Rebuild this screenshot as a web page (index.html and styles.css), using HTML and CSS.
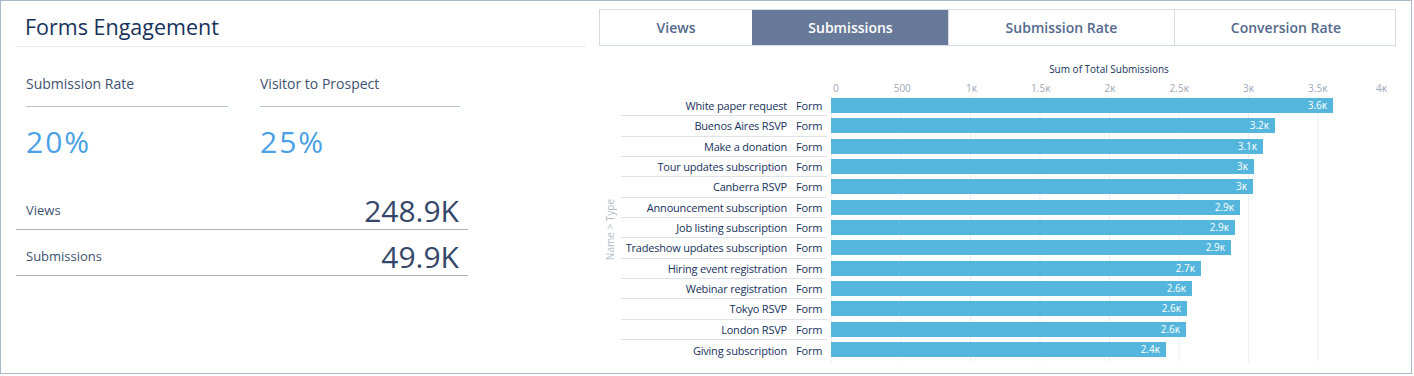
FILE: index.html
```html
<!DOCTYPE html>
<html lang="en">
<head>
<meta charset="utf-8">
<title>Forms Engagement</title>
<link rel="stylesheet" href="styles.css">
</head>
<body>
<div class="card">
  <section class="left">
    <h1 class="title">Forms Engagement</h1>
    <div class="kpis">
      <div class="kpi kpi-a">
        <div class="kpi-label">Submission Rate</div>
        <div class="kpi-value">20%</div>
      </div>
      <div class="kpi kpi-b">
        <div class="kpi-label">Visitor to Prospect</div>
        <div class="kpi-value">25%</div>
      </div>
    </div>
    <div class="stats">
      <div class="stat"><span class="stat-label">Views</span><span class="stat-value">248.9K</span></div>
      <div class="stat"><span class="stat-label">Submissions</span><span class="stat-value">49.9K</span></div>
    </div>
  </section>
  <section class="right">
    <div class="tabs">
      <div class="tab">Views</div>
      <div class="tab active">Submissions</div>
      <div class="tab">Submission Rate</div>
      <div class="tab">Conversion Rate</div>
    </div>
    <div class="chart">
      <div class="chart-title">Sum of Total Submissions</div>
      <div class="ticks">
        <div class="tick first"><span>0</span></div>
        <div class="tick"><span>500</span></div>
        <div class="tick"><span>1ĸ</span></div>
        <div class="tick"><span>1.5ĸ</span></div>
        <div class="tick"><span>2ĸ</span></div>
        <div class="tick"><span>2.5ĸ</span></div>
        <div class="tick"><span>3ĸ</span></div>
        <div class="tick"><span>3.5ĸ</span></div>
        <div class="tick last"><span>4ĸ</span></div>
      </div>
      <div class="chart-body">
        <div class="axis-title"><span>Name &gt; Type</span></div>
        <div class="labels">
          <div class="label-row"><span class="name">White paper request</span><span class="type">Form</span></div>
          <div class="label-row"><span class="name">Buenos Aires RSVP</span><span class="type">Form</span></div>
          <div class="label-row"><span class="name">Make a donation</span><span class="type">Form</span></div>
          <div class="label-row"><span class="name">Tour updates subscription</span><span class="type">Form</span></div>
          <div class="label-row"><span class="name">Canberra RSVP</span><span class="type">Form</span></div>
          <div class="label-row"><span class="name">Announcement subscription</span><span class="type">Form</span></div>
          <div class="label-row"><span class="name">Job listing subscription</span><span class="type">Form</span></div>
          <div class="label-row"><span class="name">Tradeshow updates subscription</span><span class="type">Form</span></div>
          <div class="label-row"><span class="name">Hiring event registration</span><span class="type">Form</span></div>
          <div class="label-row"><span class="name">Webinar registration</span><span class="type">Form</span></div>
          <div class="label-row"><span class="name">Tokyo RSVP</span><span class="type">Form</span></div>
          <div class="label-row"><span class="name">London RSVP</span><span class="type">Form</span></div>
          <div class="label-row"><span class="name">Giving subscription</span><span class="type">Form</span></div>
        </div>
        <div class="plot">
          <div class="bar-row"><div class="bar" style="width:502px">3.6ĸ</div></div>
          <div class="bar-row"><div class="bar" style="width:444px">3.2ĸ</div></div>
          <div class="bar-row"><div class="bar" style="width:432px">3.1ĸ</div></div>
          <div class="bar-row"><div class="bar" style="width:423px">3ĸ</div></div>
          <div class="bar-row"><div class="bar" style="width:422px">3ĸ</div></div>
          <div class="bar-row"><div class="bar" style="width:409px">2.9ĸ</div></div>
          <div class="bar-row"><div class="bar" style="width:404px">2.9ĸ</div></div>
          <div class="bar-row"><div class="bar" style="width:400px">2.9ĸ</div></div>
          <div class="bar-row"><div class="bar" style="width:370px">2.7ĸ</div></div>
          <div class="bar-row"><div class="bar" style="width:361px">2.6ĸ</div></div>
          <div class="bar-row"><div class="bar" style="width:356px">2.6ĸ</div></div>
          <div class="bar-row"><div class="bar" style="width:355px">2.6ĸ</div></div>
          <div class="bar-row"><div class="bar" style="width:335px">2.4ĸ</div></div>
        </div>
      </div>
    </div>
  </section>
</div>
</body>
</html>
```
FILE: styles.css
```css
html, body {
  margin: 0;
  padding: 0;
  background: #ffffff;
}
body {
  font-family: "Open Sans", "Liberation Sans", sans-serif;
  color: #16325c;
}
.card {
  box-sizing: border-box;
  width: 1412px;
  height: 374px;
  border: 1px solid #a9b8cb;
  display: flex;
  background: #ffffff;
}

/* ---------- left ---------- */
.left {
  width: 597px;
  flex: none;
}
.title {
  margin: 0 12px 0 14px;
  padding: 12px 0 5px 10px;
  font-size: 21.5px;
  line-height: 28px;
  font-weight: 400;
  color: #16325c;
  border-bottom: 1px solid #e8ebef;
}
.kpis {
  display: flex;
  gap: 32px;
  margin: 27px 0 0 25px;
}
.kpi-a { width: 202px; }
.kpi-b { width: 200px; }
.kpi-label {
  font-size: 14px;
  line-height: 20px;
  padding-bottom: 12px;
  color: #3e5272;
  border-bottom: 1px solid #b9c1cc;
}
.kpi-value {
  margin-top: 17px;
  font-size: 30px;
  line-height: 36px;
  color: #4a9fe6;
  letter-spacing: 2px;
}
.stats {
  margin: 24px 0 0 15px;
  width: 452px;
}
.stat {
  display: flex;
  align-items: center;
  justify-content: space-between;
  padding: 9px 9px 0 10px;
  border-bottom: 1px solid #a7b3c3;
}
.stat-label {
  font-size: 13px;
  color: #3e5272;
  padding-bottom: 2px;
}
.stat-value {
  font-size: 30px;
  line-height: 36px;
  color: #34476a;
}

/* ---------- right ---------- */
.right {
  flex: 1;
  padding-top: 8px;
  min-width: 0;
}
.tabs {
  display: grid;
  grid-template-columns: 152px 196px 226px 223px;
  width: 797px;
  height: 37px;
  margin-left: 1px;
  box-sizing: border-box;
  border: 1px solid #d6dbe3;
}
.tab {
  display: flex;
  align-items: center;
  justify-content: center;
  font-size: 14px;
  font-weight: 600;
  color: #54698d;
  border-left: 1px solid #d6dbe3;
}
.tab:first-child { border-left: 0; }
.tab.active {
  background: #687a99;
  color: #ffffff;
  border-left-color: #687a99;
}

.chart {
  margin-top: 16px;
}
.chart-title {
  margin-left: 233px;
  width: 556px;
  text-align: center;
  font-size: 10px;
  line-height: 14px;
  color: #16325c;
}
.ticks {
  margin-left: 233px;
  width: 556px;
  display: flex;
  justify-content: space-between;
  font-size: 10px;
  line-height: 14px;
  color: #9da8b8;
  margin-top: 5px;
}
.tick {
  width: 0;
  display: flex;
  justify-content: center;
  white-space: nowrap;
}
.tick.first { justify-content: flex-start; padding-left: 2px; }
.tick.last { justify-content: flex-end; }

.chart-body {
  display: flex;
  align-items: stretch;
  margin-top: 1px;
}
.axis-title {
  width: 23px;
  flex: none;
  display: flex;
  align-items: center;
  justify-content: center;
}
.axis-title span {
  writing-mode: vertical-rl;
  transform: rotate(180deg);
  font-size: 10px;
  color: #b1bccb;
  white-space: nowrap;
}
.labels {
  width: 206px;
  flex: none;
}
.label-row {
  box-sizing: border-box;
  height: 20.33px;
  display: flex;
  align-items: center;
  font-size: 11px;
  letter-spacing: -0.2px;
  color: #16325c;
  border-bottom: 1px solid #dfe3e9;
  white-space: nowrap;
}
.label-row:last-child { border-bottom: 0; }
.name {
  flex: 1;
  text-align: right;
  padding-right: 9px;
}
.type {
  width: 31px;
  flex: none;
}
.plot {
  width: 556px;
  margin-left: 4px;
  padding-bottom: 2px;
  background-image: linear-gradient(to right, #eceef2 1px, transparent 1px);
  background-size: 69.5px 100%;
  background-position: 0 0;
}
.bar-row {
  height: 20.33px;
  padding-top: 2px;
  box-sizing: border-box;
}
.bar {
  height: 15px;
  background: #54b6dc;
  color: #ffffff;
  font-size: 10px;
  line-height: 15px;
  text-align: right;
  padding-right: 6px;
  box-sizing: border-box;
}
```
